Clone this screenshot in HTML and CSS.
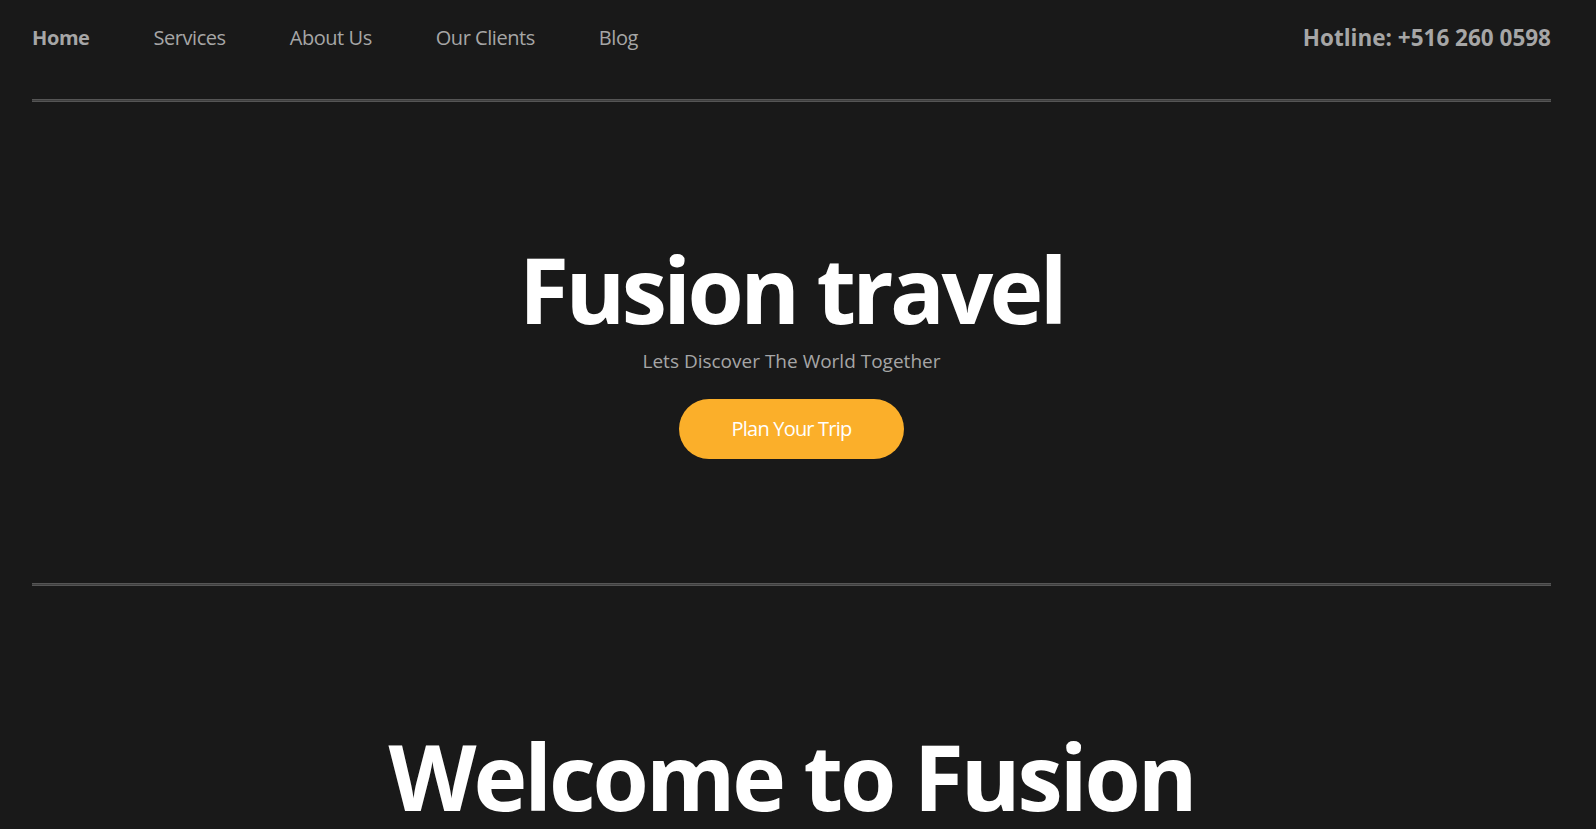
FILE: index.html
```html
<!DOCTYPE html>
<html lang="en">
<head>
<meta charset="utf-8">
<title>Fusion travel</title>
<link rel="stylesheet" href="styles.css">
</head>
<body>
<div class="page">
  <header class="header">
    <nav class="nav">
      <a class="nav-link active" href="#">Home</a>
      <a class="nav-link" href="#">Services</a>
      <a class="nav-link" href="#">About Us</a>
      <a class="nav-link" href="#">Our Clients</a>
      <a class="nav-link" href="#">Blog</a>
    </nav>
    <div class="hotline">Hotline: +516 260 0598</div>
  </header>
  <div class="rule"></div>
  <section class="hero">
    <h1 class="hero-title">Fusion travel</h1>
    <p class="hero-sub">Lets Discover The World Together</p>
    <a class="btn" href="#">Plan Your Trip</a>
  </section>
  <div class="rule"></div>
  <section class="welcome">
    <h2 class="welcome-title">Welcome to Fusion</h2>
  </section>
</div>
</body>
</html>
```
FILE: styles.css
```css
html, body {
  margin: 0;
  padding: 0;
  background: #191919;
  overflow: hidden;
}
body {
  font-family: "Open Sans", "Noto Sans", sans-serif;
  color: #a6a6a6;
}
.page {
  padding: 0 45px 0 32px;
}
.header {
  display: flex;
  justify-content: space-between;
  align-items: flex-start;
  padding-top: 26px;
  height: 73px;
}
.nav {
  display: flex;
  gap: 64px;
}
.nav-link {
  font-size: 20px;
  line-height: 24px;
  color: #a6a6a6;
  text-decoration: none;
  letter-spacing: -0.45px;
}
.nav-link.active {
  font-weight: 700;
  letter-spacing: -0.4px;
}
.hotline {
  font-size: 22.5px;
  line-height: 24px;
  font-weight: 700;
  color: #a6a6a6;
  letter-spacing: 0;
}
.rule {
  height: 1px;
  background: #3f3f3f;
  border-top: 1px solid #555;
  border-bottom: 1px solid #555;
}
.hero {
  display: flex;
  flex-direction: column;
  align-items: center;
  padding-top: 130px;
  padding-bottom: 124px;
}
.hero-title, .welcome-title {
  margin: 0;
  font-size: 91px;
  line-height: 115px;
  font-weight: 700;
  color: #ffffff;
  letter-spacing: -3.6px;
}
.welcome-title {
  letter-spacing: -3.05px;
}
.hero-sub {
  margin: 2px 0 0;
  font-size: 19px;
  line-height: 24px;
  color: #a6a6a6;
  letter-spacing: 0;
}
.btn {
  margin-top: 26px;
  width: 225px;
  box-sizing: border-box;
  padding: 18px 0;
  text-align: center;
  border-radius: 30px;
  background: #fbaf2a;
  color: #ffffff;
  font-size: 20px;
  line-height: 24px;
  text-decoration: none;
  letter-spacing: -0.8px;
}
.welcome {
  display: flex;
  justify-content: center;
  padding-top: 133px;
}
```
